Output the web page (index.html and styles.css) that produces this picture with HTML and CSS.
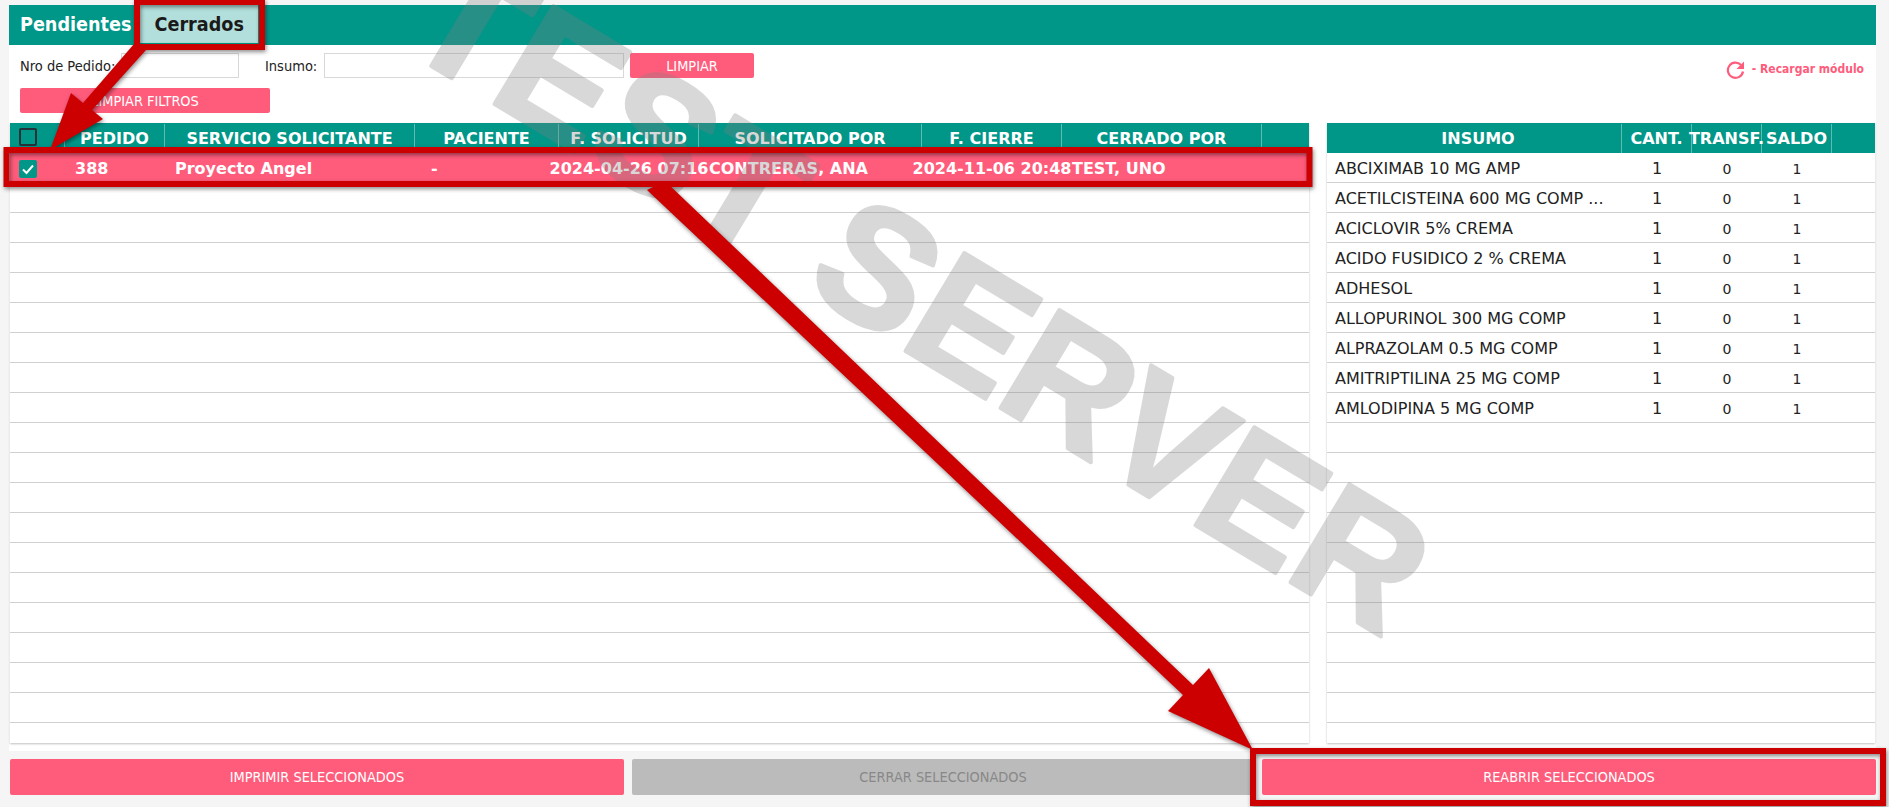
FILE: index.html
```html
<!DOCTYPE html>
<html lang="es">
<head>
    <meta charset="UTF-8">
    <title>Pedidos</title>
    <link rel="stylesheet" href="styles.css">
</head>
<body>
    <div class="panel">
        <nav class="tabs">
            <span class="tab">Pendientes</span>
            <span class="tab tab-active">Cerrados</span>
        </nav>

        <div class="filters">
            <div class="filter-fields">
                <div class="filter-row">
                    <label class="lbl-pedido">Nro de Pedido:</label>
                    <input class="input-pedido" type="text">
                    <label class="lbl-insumo">Insumo:</label>
                    <input class="input-insumo" type="text">
                    <button class="btn btn-limpiar">LIMPIAR</button>
                </div>
                <button class="btn btn-filtros">LIMPIAR FILTROS</button>
            </div>
            <a class="reload">
                <svg class="reload-icon" viewBox="0 0 19 19"><path d="M15 5A7.6 7.6 0 1 0 17 11.5" fill="none" stroke="currentColor" stroke-width="2.2"/><polygon points="18,1.5 18,9 10.5,9" fill="currentColor"/></svg>
                <span>- Recargar módulo</span>
            </a>
        </div>

        <div class="tables">
            <section class="grid grid-pedidos">
                <div class="row row-head">
                    <div class="c c-check"><span class="check"></span></div>
                    <div class="c c-pedido">PEDIDO</div>
                    <div class="c c-servicio">SERVICIO SOLICITANTE</div>
                    <div class="c c-paciente">PACIENTE</div>
                    <div class="c c-fecha">F. SOLICITUD</div>
                    <div class="c c-por">SOLICITADO POR</div>
                    <div class="c c-fecha">F. CIERRE</div>
                    <div class="c c-cerrado">CERRADO POR</div>
                </div>
                <div class="row row-selected">
                    <div class="c c-check"><span class="check check-on"><svg viewBox="0 0 18 18"><path d="M4 9.5l3.5 3.5L14 5.5" fill="none" stroke="#fff" stroke-width="2"/></svg></span></div>
                    <div class="c c-pedido left">388</div>
                    <div class="c c-servicio left">Proyecto Angel</div>
                    <div class="c c-paciente left dash">-</div>
                    <div class="c c-fecha">2024-04-26 07:16</div>
                    <div class="c c-por left">CONTRERAS, ANA</div>
                    <div class="c c-fecha">2024-11-06 20:48</div>
                    <div class="c c-cerrado left">TEST, UNO</div>
                </div>
                <div class="row"></div><div class="row"></div><div class="row"></div><div class="row"></div><div class="row"></div><div class="row"></div>
                <div class="row"></div><div class="row"></div><div class="row"></div><div class="row"></div><div class="row"></div><div class="row"></div>
                <div class="row"></div><div class="row"></div><div class="row"></div><div class="row"></div><div class="row"></div><div class="row"></div>
                <div class="row row-last"></div>
            </section>

            <section class="grid grid-insumos">
                <div class="row row-head">
                    <div class="c c-insumo center">INSUMO</div>
                    <div class="c c-num">CANT.</div>
                    <div class="c c-num">TRANSF.</div>
                    <div class="c c-num">SALDO</div>
                </div>
                <div class="row"><div class="c c-insumo">ABCIXIMAB 10 MG AMP</div><div class="c c-num">1</div><div class="c c-num small">0</div><div class="c c-num small">1</div></div>
                <div class="row"><div class="c c-insumo">ACETILCISTEINA 600 MG COMP ...</div><div class="c c-num">1</div><div class="c c-num small">0</div><div class="c c-num small">1</div></div>
                <div class="row"><div class="c c-insumo">ACICLOVIR 5% CREMA</div><div class="c c-num">1</div><div class="c c-num small">0</div><div class="c c-num small">1</div></div>
                <div class="row"><div class="c c-insumo">ACIDO FUSIDICO 2 % CREMA</div><div class="c c-num">1</div><div class="c c-num small">0</div><div class="c c-num small">1</div></div>
                <div class="row"><div class="c c-insumo">ADHESOL</div><div class="c c-num">1</div><div class="c c-num small">0</div><div class="c c-num small">1</div></div>
                <div class="row"><div class="c c-insumo">ALLOPURINOL 300 MG COMP</div><div class="c c-num">1</div><div class="c c-num small">0</div><div class="c c-num small">1</div></div>
                <div class="row"><div class="c c-insumo">ALPRAZOLAM 0.5 MG COMP</div><div class="c c-num">1</div><div class="c c-num small">0</div><div class="c c-num small">1</div></div>
                <div class="row"><div class="c c-insumo">AMITRIPTILINA 25 MG COMP</div><div class="c c-num">1</div><div class="c c-num small">0</div><div class="c c-num small">1</div></div>
                <div class="row"><div class="c c-insumo">AMLODIPINA 5 MG COMP</div><div class="c c-num">1</div><div class="c c-num small">0</div><div class="c c-num small">1</div></div>
                <div class="row"></div><div class="row"></div><div class="row"></div><div class="row"></div><div class="row"></div>
                <div class="row"></div><div class="row"></div><div class="row"></div><div class="row"></div><div class="row"></div>
                <div class="row row-last"></div>
            </section>
        </div>
    </div>

    <div class="actions">
        <button class="btn">IMPRIMIR SELECCIONADOS</button>
        <button class="btn btn-off">CERRAR SELECCIONADOS</button>
        <button class="btn">REABRIR SELECCIONADOS</button>
    </div>

    <!-- marca de agua y anotaciones sobre la captura -->
    <svg class="overlay" width="1889" height="807" viewBox="0 0 1889 807">
        <text class="watermark" transform="translate(398 46) rotate(31)">TEST SERVER</text>
        <g class="marks">
            <rect class="mark" x="137" y="2" width="125" height="45"/>
            <rect class="mark" x="6.5" y="150" width="1303" height="34"/>
            <rect class="mark" x="1253" y="751" width="630" height="52"/>
            <polygon class="arrow" points="134,44 146,50 92,110 103,119 50,150 71,93 83,103"/>
            <polygon class="arrow" points="665,181 1193,685 1209,668 1253,750 1168,711 1183,695 647,190"/>
        </g>
    </svg>
</body>
</html>
```

FILE: styles.css
```css
html, body {
    margin: 0;
    height: 807px;
    overflow: hidden;
}
body {
    position: relative;
    box-sizing: border-box;
    padding: 5px 13px 0 9px;
    background: #f5f5f5;
    color: #222;
    font-family: 'DejaVu Sans', sans-serif;
    font-stretch: condensed;
}
.panel {
    height: 746px;
    background: white;
}
.tabs {
    display: flex;
    height: 40px;
    padding-left: 11px;
    gap: 9px;
    background: #009688;
}
.tab {
    font-size: 19.6px;
    font-weight: bold;
    line-height: 40px;
    color: white;
}
.tab-active {
    height: 38px;
    padding: 0 14px;
    background: #b2dfdb;
    color: #1a1a1a;
}
.filters {
    display: flex;
    justify-content: space-between;
    height: 78px;
}
.filter-fields {
    padding: 8px 0 0 11px;
}
.filter-row {
    display: flex;
    align-items: center;
    height: 25px;
    font-size: 14.5px;
}
.lbl-pedido {
    width: 101px;
}
.input-pedido {
    width: 118px;
    margin-right: 26px;
}
.lbl-insumo {
    width: 59px;
}
.input-insumo {
    width: 300px;
    margin-right: 6px;
}
input {
    box-sizing: border-box;
    height: 25px;
    padding: 0;
    border: 1px solid #d8d8d8;
    background: white;
}
.btn {
    border: none;
    border-radius: 2px;
    background: #ff5c7c;
    color: white;
    font-family: inherit;
    font-stretch: condensed;
    font-size: 14.4px;
}
.btn-limpiar {
    width: 124px;
    height: 25px;
}
.btn-filtros {
    display: block;
    width: 250px;
    height: 25px;
    margin-top: 10px;
}
.btn-off {
    background: #bbbbbb;
    color: #888;
}
.reload {
    display: flex;
    align-items: center;
    gap: 7px;
    height: 26px;
    margin: 11px 12px 0 0;
    font-size: 12px;
    font-weight: bold;
    color: #ff5c7c;
}
.reload-icon {
    width: 19px;
    height: 19px;
}
.tables {
    display: flex;
    padding-left: 1px;
    gap: 18px;
}
.grid {
    height: 620px;
    overflow: hidden;
    background: white;
    box-shadow: 0 1px 2px rgba(0, 0, 0, 0.25);
}
.grid-pedidos {
    width: 1299px;
}
.grid-insumos {
    width: 548px;
}
.row {
    display: flex;
    box-sizing: border-box;
    height: 30px;
    padding-top: 2px;
    border-bottom: 1px solid #d0d0d0;
    font-size: 16px;
    font-stretch: normal;
}
.row-head {
    padding-top: 1px;
    border-bottom: none;
    background: #009688;
    color: white;
    font-weight: bold;
}
.row-head .c {
    border-right: 1px solid #5fbcb2;
}
.row-head .check {
    margin-bottom: 3px;
}
.row-selected {
    background: #ff5c7c;
    color: white;
    font-weight: bold;
}
.row-last {
    border-bottom: none;
}
.c {
    display: flex;
    box-sizing: border-box;
    flex: none;
    align-items: center;
    justify-content: center;
    white-space: nowrap;
}
.c-check { width: 55px; justify-content: flex-start; padding-left: 9px; }
.c-pedido { width: 100px; }
.c-servicio { width: 250px; }
.c-paciente { width: 144px; }
.c-fecha { width: 140px; }
.c-por { width: 223px; }
.c-cerrado { width: 200px; }
.c-insumo { width: 295px; justify-content: flex-start; padding-left: 8px; }
.c-num { width: 70px; }
.left { justify-content: flex-start; padding-left: 10px; }
.dash { padding-left: 16px; }
.center { justify-content: center; }
.small { font-size: 14px; }
.check {
    display: block;
    box-sizing: border-box;
    width: 18px;
    height: 18px;
    border: 2px solid #263238;
    border-radius: 2px;
}
.check-on {
    border: none;
    background: #009688;
}
.check-on svg {
    display: block;
}
.actions {
    display: grid;
    grid-template-columns: 614px 1fr 614px;
    gap: 8px;
    height: 36px;
    margin: 8px 0 0 1px;
}
.overlay {
    position: absolute;
    left: 0;
    top: 0;
}
.watermark {
    font-family: 'Liberation Sans', sans-serif;
    font-size: 166px;
    font-weight: bold;
    fill: #808080;
    stroke: #808080;
    stroke-width: 4;
    stroke-linejoin: round;
    opacity: 0.3;
}
.marks {
    filter: drop-shadow(1px 2px 2px rgba(0, 0, 0, 0.45));
}
.mark {
    fill: none;
    stroke: #cc0000;
    stroke-width: 6;
}
.arrow {
    fill: #cc0000;
}
```
